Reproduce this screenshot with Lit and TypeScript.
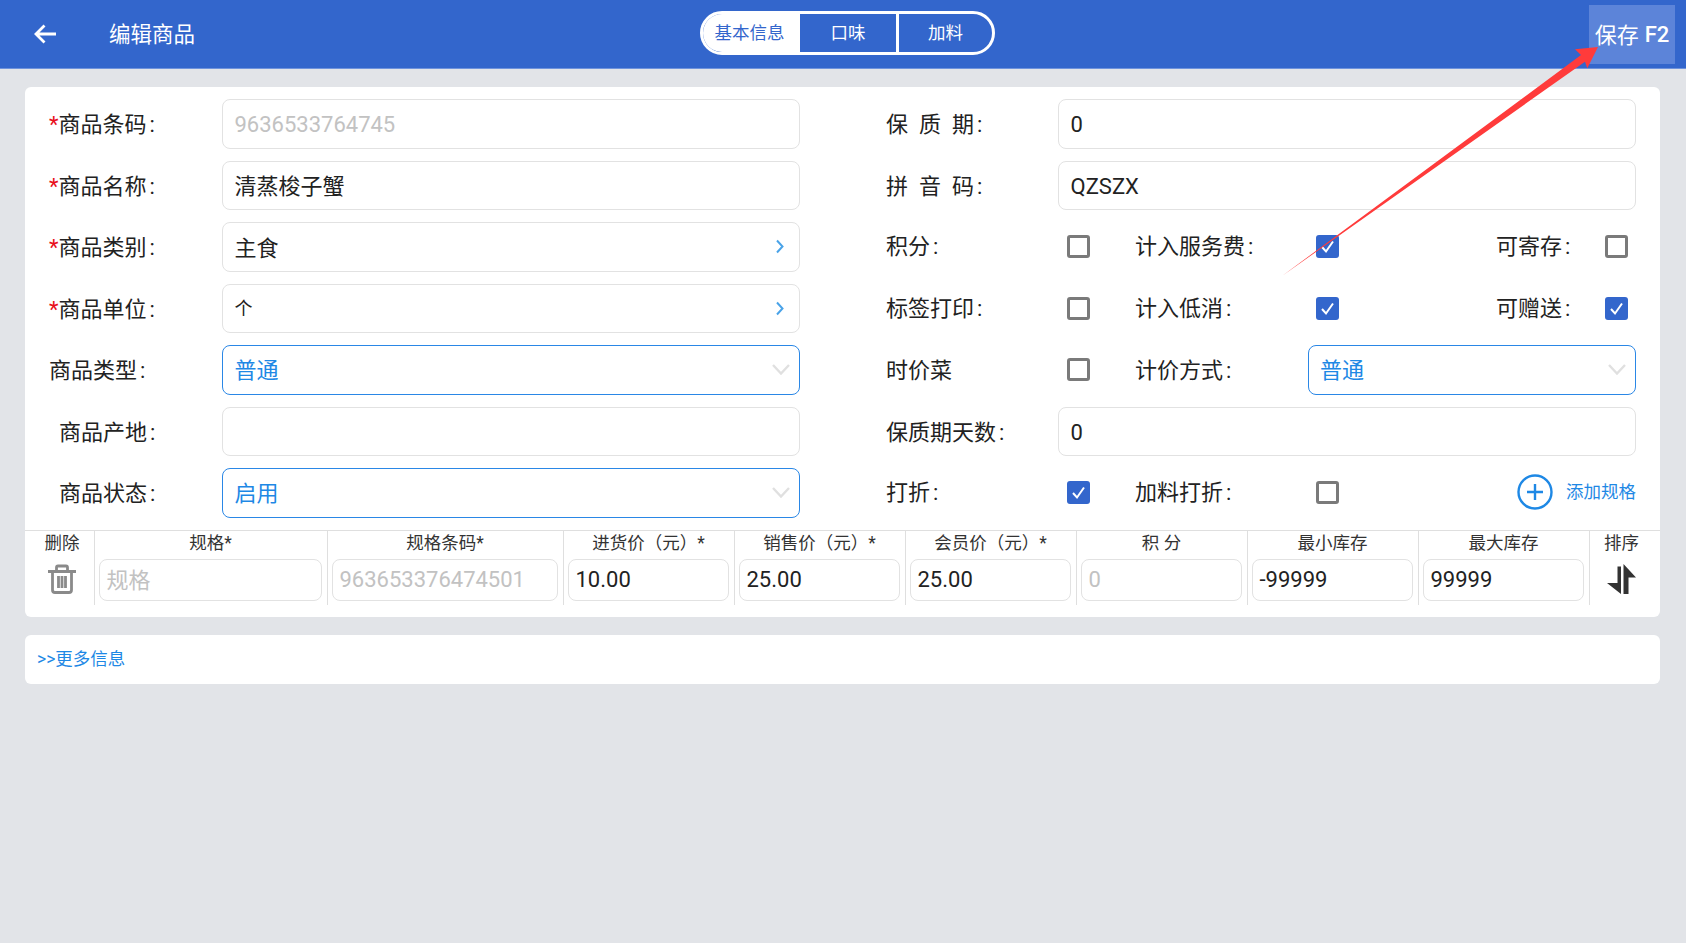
import { LitElement, css, html, nothing } from 'lit';
import { customElement } from 'lit/decorators.js';
import { classMap } from 'lit/directives/class-map.js';

const chevronRight = html`<svg class="chev-right" width="10" height="15" viewBox="0 0 10 15"><path d="M2 1.5 L7.5 7.5 L2 13.5" fill="none" stroke="#4aa3e8" stroke-width="2"/></svg>`;
const chevronDown = html`<svg class="chev-down" width="18" height="11" viewBox="0 0 18 11"><path d="M1 1 L9 9.5 L17 1" fill="none" stroke="#e0e0e0" stroke-width="2.4"/></svg>`;

const isCjk = (text: string) => /[\u4e00-\u9fff]/.test(text);

const label = (text: string, star = false, indent = false, spaced = false) => html`
  <div class=${classMap({ label: true, indent, spaced })}>${star ? html`<span class="star">*</span>` : nothing}<span class="label-text">${text}</span><span class="colon">:</span></div>
`;

const field = (text: string, opts: { muted?: boolean; small?: boolean; more?: boolean } = {}) => html`
  <div class="field">
    <span class=${classMap({ value: true, cjk: isCjk(text), latin: !isCjk(text), muted: !!opts.muted, small: !!opts.small })}>${text}</span>
    ${opts.more ? chevronRight : nothing}
  </div>
`;

const select = (text: string) => html`
  <div class="field select"><span class="value cjk">${text}</span>${chevronDown}</div>
`;

const box = (checked: boolean) => html`
  <div class=${classMap({ box: true, checked })}>
    ${checked ? html`<svg width="23" height="23" viewBox="0 0 23 23"><path d="M6 12 L10 16.5 L17 6.5" fill="none" stroke="#fff" stroke-width="2"/></svg>` : nothing}
  </div>
`;

interface Col {
  head: string;
  value: string;
  muted?: boolean;
}

const columns: Col[] = [
  { head: '规格*', value: '规格', muted: true },
  { head: '规格条码*', value: '963653376474501', muted: true },
  { head: '进货价（元）*', value: '10.00' },
  { head: '销售价（元）*', value: '25.00' },
  { head: '会员价（元）*', value: '25.00' },
  { head: '积 分', value: '0', muted: true },
  { head: '最小库存', value: '-99999' },
  { head: '最大库存', value: '99999' },
];

@customElement('app-root')
export class AppRoot extends LitElement {
  static styles = css`
    :host {
      display: block;
      position: relative;
      min-height: 943px;
      overflow: hidden;
      background: #e2e4e8;
      font-family: Roboto, 'Noto Sans CJK SC', sans-serif;
      font-size: 22px;
      color: #222;
    }

    .header {
      display: flex;
      align-items: center;
      height: 68px;
      background: #3366cc;
      border-bottom: 1px solid #6f93dc;
      color: #fff;
    }
    .back {
      display: flex;
      width: 109px;
      padding-left: 34px;
      box-sizing: border-box;
    }
    .title {
      width: 591px;
      padding-bottom: 4px;
      font-size: 21.5px;
    }
    .tabs {
      display: flex;
      width: 295px;
      height: 44px;
      margin-bottom: 2px;
      box-sizing: border-box;
      border: 3px solid #fff;
      border-radius: 22px;
      overflow: hidden;
      font-size: 17.5px;
    }
    .tab {
      display: flex;
      align-items: center;
      justify-content: center;
      width: 97px;
      padding-bottom: 3px;
      box-sizing: border-box;
    }
    .tab.active {
      padding-right: 4px;
      background: #fff;
      color: #3366cc;
    }
    .tab.mid {
      width: 99px;
      border-right: 3px solid #fff;
    }
    .tab.last {
      flex: 1;
    }
    .save {
      display: flex;
      align-items: center;
      justify-content: center;
      gap: 6px;
      width: 86px;
      height: 59px;
      margin-left: auto;
      margin-right: 11px;
      background: #5c84d9;
    }
    .save span {
      padding-bottom: 3px;
    }
    .save b {
      font-weight: 500;
    }

    .card {
      margin: 0 26px 0 25px;
      background: #fff;
      border-radius: 6px;
    }
    .main {
      margin-top: 18px;
      padding-bottom: 12px;
    }
    .more {
      margin-top: 18px;
      height: 49px;
      display: flex;
      align-items: center;
      padding: 0 0 3px 12px;
      box-sizing: border-box;
      font-size: 17.5px;
      color: #1e88e5;
    }

    .form {
      display: grid;
      grid-template-columns: 751px 750px;
      grid-auto-rows: 49.5px;
      column-gap: 86px;
      row-gap: 12px;
      padding: 12px 0 12px 24px;
    }
    .row {
      display: flex;
      align-items: center;
    }
    .row:nth-child(even) .label {
      width: 172px;
    }
    .label {
      flex: none;
      width: 173px;
      padding-bottom: 3px;
      white-space: nowrap;
    }
    .label.indent {
      padding-left: 10px;
      width: 163px;
    }
    .label.spaced .label-text {
      word-spacing: 5.5px;
    }
    .star {
      color: #e8101c;
    }
    .colon {
      margin-left: 3px;
    }
    .field {
      flex: 1;
      display: flex;
      align-items: center;
      justify-content: space-between;
      box-sizing: border-box;
      height: 100%;
      padding: 0 11.5px;
      border: 1.5px solid #e2e2e2;
      border-radius: 8px;
      background: #fff;
    }
    .field.select {
      border-color: #2a87e6;
      color: #1e88e5;
    }
    .value.cjk {
      padding-bottom: 2px;
    }
    .select .value.cjk {
      padding-bottom: 4px;
    }
    .value.latin {
      padding-top: 2px;
    }
    .value.muted {
      color: #c2c2c2;
    }
    .value.small {
      font-size: 18px;
    }
    .chev-right {
      margin-right: 3px;
    }
    .chev-down {
      margin-right: -2px;
    }

    .checks {
      display: grid;
      grid-template-columns: 181px 68px 181px 180px 109px 30px;
      align-items: center;
    }
    .checks .label {
      width: auto;
      padding-left: 0;
      padding-bottom: 5px;
    }
    .pricing {
      display: grid;
      grid-template-columns: 181px 68px 172.5px 1fr;
      align-items: center;
      height: 100%;
    }
    .pricing .label {
      width: auto;
    }
    .box {
      width: 23px;
      height: 23px;
      box-sizing: border-box;
      border: 3px solid #7a7a7a;
      border-radius: 3px;
    }
    .box.checked {
      border: none;
      background: #3366cc;
    }
    .add {
      grid-column: 5 / -1;
      display: flex;
      align-items: center;
      justify-content: flex-end;
      gap: 13px;
      margin-left: -100px;
      margin-right: -1px;
      margin-bottom: 2px;
      font-size: 17.5px;
      color: #1e88e5;
    }
    .add span {
      padding-bottom: 2px;
    }

    .table {
      display: grid;
      grid-template-columns: 69px 233px 236px repeat(6, 171px) 70px;
      border-top: 1px solid #dfdfdf;
    }
    .cell {
      display: flex;
      flex-direction: column;
      height: 74px;
      box-sizing: border-box;
      padding: 0 5px 0 4px;
      border-left: 1px solid #dfdfdf;
      font-size: 17.5px;
      color: #333;
    }
    .cell:first-child {
      border-left: none;
      padding: 0 0 0 5px;
    }
    .cell:last-child {
      padding: 0 10px 0 4px;
    }
    .head {
      flex: none;
      height: 28px;
      line-height: 25px;
      text-align: center;
      white-space: nowrap;
    }
    .cell .field {
      flex: none;
      height: 42px;
      padding: 0 6.5px;
      font-size: 22px;
      color: #222;
    }
    .cell .value.cjk {
      padding-bottom: 3px;
    }
    .cell .value.latin {
      padding-top: 0;
    }
    .icon {
      display: flex;
      justify-content: center;
      padding-top: 5px;
    }

    .pointer {
      position: absolute;
      top: 0;
      left: 0;
      pointer-events: none;
    }
  `;

  render() {
    return html`
      <div class="header">
        <div class="back">
          <svg width="23" height="20" viewBox="0 0 23 20"><path d="M22 10 H3 M10.5 1.5 L2 10 L10.5 18.5" fill="none" stroke="#fff" stroke-width="2.8"/></svg>
        </div>
        <div class="title">编辑商品</div>
        <div class="tabs">
          <div class="tab active">基本信息</div>
          <div class="tab mid">口味</div>
          <div class="tab last">加料</div>
        </div>
        <div class="save"><span>保存</span><b>F2</b></div>
      </div>

      <div class="card main">
        <div class="form">
          <div class="row">${label('商品条码', true)}${field('9636533764745', { muted: true })}</div>
          <div class="row">${label('保 质 期', false, false, true)}${field('0')}</div>

          <div class="row">${label('商品名称', true)}${field('清蒸梭子蟹')}</div>
          <div class="row">${label('拼 音 码', false, false, true)}${field('QZSZX')}</div>

          <div class="row">${label('商品类别', true)}${field('主食', { more: true })}</div>
          <div class="checks">
            ${label('积分')}${box(false)}${label('计入服务费')}${box(true)}${label('可寄存')}${box(false)}
          </div>

          <div class="row">${label('商品单位', true)}${field('个', { small: true, more: true })}</div>
          <div class="checks">
            ${label('标签打印')}${box(false)}${label('计入低消')}${box(true)}${label('可赠送')}${box(true)}
          </div>

          <div class="row">${label('商品类型')}${select('普通')}</div>
          <div class="pricing">
            <div class="label">时价菜</div>${box(false)}${label('计价方式')}${select('普通')}
          </div>

          <div class="row">${label('商品产地', false, true)}${field('')}</div>
          <div class="row">${label('保质期天数')}${field('0')}</div>

          <div class="row">${label('商品状态', false, true)}${select('启用')}</div>
          <div class="checks">
            ${label('打折')}${box(true)}${label('加料打折')}${box(false)}
            <div class="add">
              <svg width="36" height="36" viewBox="0 0 36 36"><circle cx="18" cy="18" r="16.5" fill="none" stroke="#1e88e5" stroke-width="2.4"/><path d="M18 10 V26 M10 18 H26" stroke="#1e88e5" stroke-width="2.4"/></svg>
              <span>添加规格</span>
            </div>
          </div>
        </div>

        <div class="table">
          <div class="cell">
            <div class="head">删除</div>
            <div class="icon">
              <svg width="28" height="30" viewBox="0 0 28 30"><path d="M0 7.5 H28 M8.5 7 V3.5 Q8.5 2 10 2 H18 Q19.5 2 19.5 3.5 V7 M4.5 7 V26 Q4.5 28.5 7 28.5 H21 Q23.5 28.5 23.5 26 V7 M10.5 12 V24 M14 12 V24 M17.5 12 V24" fill="none" stroke="#8a8a8a" stroke-width="2.8"/></svg>
            </div>
          </div>
          ${columns.map(col => html`
            <div class="cell">
              <div class="head">${col.head}</div>
              <div class="field"><span class=${classMap({ value: true, cjk: isCjk(col.value), latin: !isCjk(col.value), muted: !!col.muted })}>${col.value}</span></div>
            </div>
          `)}
          <div class="cell">
            <div class="head">排序</div>
            <div class="icon">
              <svg width="29" height="30" viewBox="0 0 29 30"><path d="M10.5 2.5 H14 V30 L0 19 H10.5 Z M16.5 0 L29 13.5 H21.5 V30 H16.5 Z" fill="#333"/></svg>
            </div>
          </div>
        </div>
      </div>

      <div class="card more"><span>&gt;&gt;更多信息</span></div>

      <svg class="pointer" width="1686" height="943" viewBox="0 0 1686 943">
        <polygon points="1598,47 1587.3,68.3 1585,61.7 1282,276 1581,55 1575,49.3" fill="#ff3b3b"/>
      </svg>
    `;
  }
}
